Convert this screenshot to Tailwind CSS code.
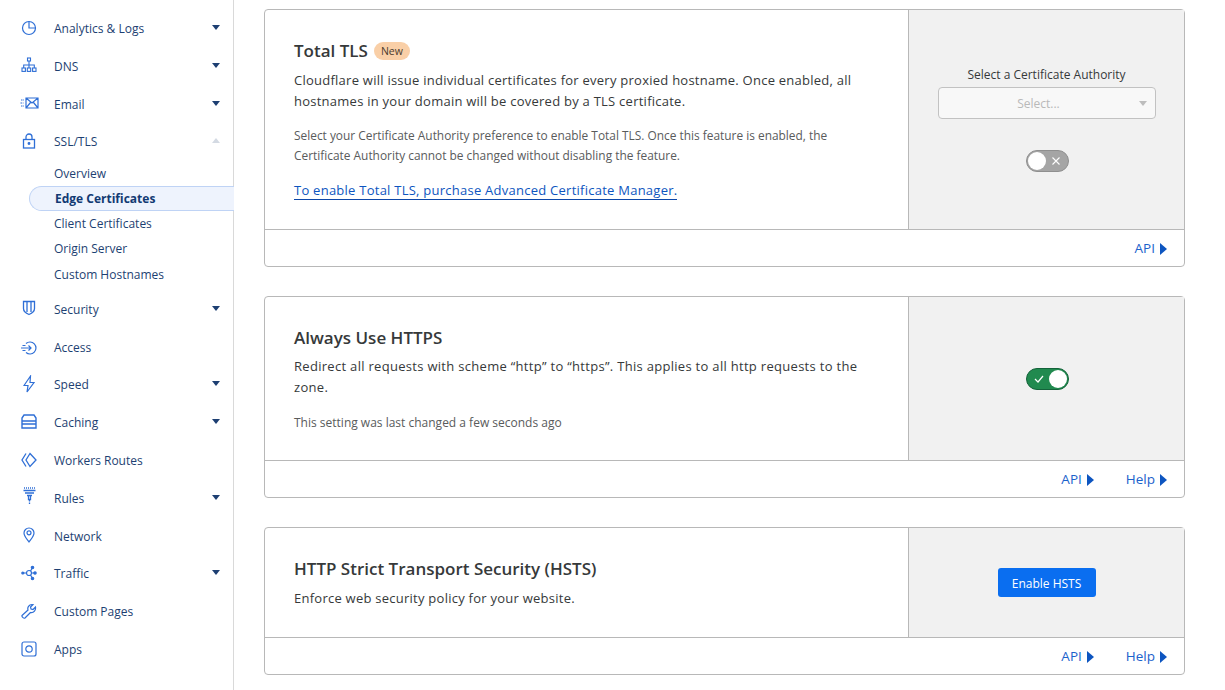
<!DOCTYPE html>
<html><head><meta charset="utf-8"><script src="https://cdn.jsdelivr.net/npm/@tailwindcss/browser@4"></script></head>
<body class="bg-white font-['Open_Sans',sans-serif] overflow-hidden">
<div class="flex w-[1225px] h-[690px] overflow-hidden">
<aside class="w-[234px] shrink-0 h-full border-r border-[#d9d9d9] pt-[10px] text-[12px] text-[#1d3f72]">
 <div class="h-[38px] flex items-center relative"><svg class="absolute left-[21px] top-[10px] w-4 h-4" viewBox="0 0 16 16" fill="none" stroke="#2f6fd6" stroke-width="1.200"><circle cx="8" cy="8" r="6.500"/><path d="M8 1.500V8h6.500"/></svg><span class="ml-[54px]">Analytics &amp; Logs</span><i class="absolute left-[212px] top-[15px] border-x-[4.500px] border-x-transparent border-t-[5px] border-t-[#1d3f72]"></i></div>
 <div class="h-[38px] flex items-center relative"><svg class="absolute left-[21px] top-[9px] w-4 h-4" viewBox="0 0 16 16" fill="none" stroke="#2f6fd6" stroke-width="1.100"><rect x="6.500" y="1" width="3" height="3"/><rect x="1" y="11" width="3.400" height="3.400"/><rect x="6.300" y="11" width="3.400" height="3.400"/><rect x="11.600" y="11" width="3.400" height="3.400"/><path d="M8 4v7M2.700 11V8h10.600v3"/></svg><span class="ml-[54px]">DNS</span><i class="absolute left-[212px] top-[15px] border-x-[4.500px] border-x-transparent border-t-[5px] border-t-[#1d3f72]"></i></div>
 <div class="h-[38px] flex items-center relative"><svg class="absolute left-[20px] top-[9px] w-[19px] h-4" viewBox="0 0 19 16" fill="none" stroke="#2f6fd6" stroke-width="1.200"><path d="M6 3h12v10H6zM6 3l6 5 6-5M6 13l4.500-5.500M18 13l-4.500-5.500"/><path d="M1 5h3M0.500 8h3M1 11h3" stroke-dasharray="1.500 .7"/></svg><span class="ml-[54px]">Email</span><i class="absolute left-[212px] top-[15px] border-x-[4.500px] border-x-transparent border-t-[5px] border-t-[#1d3f72]"></i></div>
 <div class="h-[36px] flex items-center relative"><svg class="absolute left-[22px] top-[9px] w-[14px] h-4" viewBox="0 0 14 16" fill="none" stroke="#2f6fd6" stroke-width="1.300"><rect x="1.500" y="6.500" width="11" height="8.500"/><path d="M4 6.500V4a3 3 0 0 1 6 0v2.500"/><circle cx="7" cy="10.500" r=".8" fill="#2f6fd6"/></svg><span class="ml-[54px]">SSL/TLS</span><i class="absolute left-[212px] top-[14px] border-x-[4.500px] border-x-transparent border-b-[5px] border-b-[#d4dae3]"></i></div>
 <div class="pt-[1px] pb-[2px] flex flex-col">
  <a class="h-[25px] flex items-center pl-[54px]">Overview</a>
  <a class="h-[25px] flex items-center ml-[29px] pl-[26px] font-bold relative text-[#123a73]"><span class="absolute left-0 right-[-1px] inset-y-0 rounded-l-[13px] bg-[#eef3fd] border border-r-0 border-[#bfd3f5]"></span><span class="relative">Edge Certificates</span></a>
  <a class="h-[25px] flex items-center pl-[54px]">Client Certificates</a>
  <a class="h-[25px] flex items-center pl-[54px]">Origin Server</a>
  <a class="h-[27px] flex items-center pl-[54px]">Custom Hostnames</a>
 </div>
 <div class="h-[40px] flex items-center relative"><svg class="absolute left-[22px] top-[10px] w-[14px] h-4" viewBox="0 0 14 16" fill="none" stroke="#2f6fd6" stroke-width="1.300"><path d="M1.500 1.500h11v7c0 3-3 5-5.500 6-2.500-1-5.500-3-5.500-6z"/><path d="M5 1.500v10.500M9 1.500v10.500"/></svg><span class="ml-[54px]">Security</span><i class="absolute left-[212px] top-[16px] border-x-[4.500px] border-x-transparent border-t-[5px] border-t-[#1d3f72]"></i></div>
 <div class="h-[36px] flex items-center relative"><svg class="absolute left-[20px] top-[10px] w-[18px] h-4" viewBox="0 0 18 16" fill="none" stroke="#2f6fd6" stroke-width="1.200"><path d="M6 3.500a6 6 0 1 1 0 9"/><path d="M1 8h10M8.500 5.500 11 8l-2.500 2.500M2.500 5.500h3M2.500 10.500h3"/></svg><span class="ml-[54px]">Access</span></div>
 <div class="h-[38px] flex items-center relative"><svg class="absolute left-[23px] top-[9px] w-3 h-[18px]" viewBox="0 0 12 18" fill="none" stroke="#2f6fd6" stroke-width="1.200"><path d="M7.500 1 1 10.500h4L4 17l7-9.500H7z"/></svg><span class="ml-[54px]">Speed</span><i class="absolute left-[212px] top-[15px] border-x-[4.500px] border-x-transparent border-t-[5px] border-t-[#1d3f72]"></i></div>
 <div class="h-[38px] flex items-center relative"><svg class="absolute left-[21px] top-[10px] w-4 h-[15px]" viewBox="0 0 16 15" fill="none" stroke="#2f6fd6" stroke-width="1.400"><path d="M3 1h10l2 3v3H1V4zM1 7h14v3H1zM1 10h14v4H1z"/></svg><span class="ml-[54px]">Caching</span><i class="absolute left-[212px] top-[15px] border-x-[4.500px] border-x-transparent border-t-[5px] border-t-[#1d3f72]"></i></div>
 <div class="h-[38px] flex items-center relative"><svg class="absolute left-[21px] top-[10px] w-4 h-4" viewBox="0 0 16 16" fill="none" stroke="#2f6fd6" stroke-width="1.300"><path d="M5 1.500 1 8l4 6.500M9 1.500 15 8l-6 6.500L5 8z"/></svg><span class="ml-[54px]">Workers Routes</span></div>
 <div class="h-[38px] flex items-center relative"><svg class="absolute left-[23px] top-[7px] w-[13px] h-[19px]" viewBox="0 0 13 19" fill="none" stroke="#2f6fd6" stroke-width="1.300"><path d="M1 1h11" stroke-dasharray="1 1"/><path d="M.500 3.500h12M2 6h9M4 8.500h5M5.500 8.500v4h2v-4"/><path d="M6.500 13v5" stroke-dasharray="1.500 1"/></svg><span class="ml-[54px]">Rules</span><i class="absolute left-[212px] top-[15px] border-x-[4.500px] border-x-transparent border-t-[5px] border-t-[#1d3f72]"></i></div>
 <div class="h-[37px] flex items-center relative"><svg class="absolute left-[23px] top-[9px] w-3 h-4" viewBox="0 0 12 16" fill="none" stroke="#2f6fd6" stroke-width="1.200"><path d="M6 15C3 11 1 9 1 6a5 5 0 0 1 10 0c0 3-2 5-5 9z"/><circle cx="6" cy="5.800" r="2"/></svg><span class="ml-[54px]">Network</span></div>
 <div class="h-[38px] flex items-center relative"><svg class="absolute left-[21px] top-[10px] w-4 h-4" viewBox="0 0 16 16" fill="none" stroke="#2f6fd6" stroke-width="1.200"><circle cx="8" cy="8" r="2.500"/><circle cx="1.800" cy="8" r="1" fill="#2f6fd6"/><circle cx="11.500" cy="2.500" r="1.200" fill="#2f6fd6"/><circle cx="14" cy="8" r="1.200" fill="#2f6fd6"/><circle cx="11.500" cy="13.500" r="1.200" fill="#2f6fd6"/><path d="M3 8h2.500M9.500 6l1.500-2.500M10.500 8H13M9.500 10l1.500 2.500"/></svg><span class="ml-[54px]">Traffic</span><i class="absolute left-[212px] top-[15px] border-x-[4.500px] border-x-transparent border-t-[5px] border-t-[#1d3f72]"></i></div>
 <div class="h-[38px] flex items-center relative"><svg class="absolute left-[21px] top-[10px] w-4 h-4" viewBox="0 0 16 16" fill="none" stroke="#2f6fd6" stroke-width="1.200"><path d="M1 12.500 7 7c-.8-2.500.8-5.500 4-5.500l1 .2-2.500 2.300.5 2 2 .5L14.500 4c.5 3-1.500 6-5 5.500L4 15c-1 .8-3.500-1-3-2.500z"/></svg><span class="ml-[54px]">Custom Pages</span></div>
 <div class="h-[38px] flex items-center relative"><svg class="absolute left-[21px] top-[10px] w-4 h-4" viewBox="0 0 16 16" fill="none" stroke="#2f6fd6" stroke-width="1.200"><rect x="1" y="1" width="14" height="14" rx="2"/><circle cx="8" cy="8" r="3.200"/></svg><span class="ml-[54px]">Apps</span></div>
</aside>
<main class="flex-1 pl-[30px] pr-[40px] pt-[9px] text-[#36393a]">
 <section class="border border-[#b8b8b8] rounded-[4px] h-[258px] flex flex-col">
  <div class="flex h-[220px] border-b border-[#b8b8b8]">
   <div class="w-[643px] pl-[29px] pr-[40px] pt-[29px]">
    <div class="flex items-center gap-[6px] h-[24px]"><h3 class="text-[17px] font-semibold">Total TLS</h3><span class="bg-[#f9cfa7] text-[#4a3a2d] rounded-[9px] text-[10.500px] px-[7px] h-[18px] leading-[18px]">New</span></div>
    <p class="text-[13px] leading-[21px] tracking-[.25px] mt-[7px]">Cloudflare will issue individual certificates for every proxied hostname. Once enabled, all hostnames in your domain will be covered by a TLS certificate.</p>
    <p class="text-[11.900px] leading-[19.500px] text-[#595b5c] mt-[14px]">Select your Certificate Authority preference to enable Total TLS. Once this feature is enabled, the Certificate Authority cannot be changed without disabling the feature.</p>
    <a class="inline-block mt-[16px] text-[13px] tracking-[.25px] leading-[18px] text-[#0d55c0] border-b border-[#0d47a8]">To enable Total TLS, purchase Advanced Certificate Manager.</a>
   </div>
   <div class="flex-1 bg-[#f1f1f1] border-l border-[#b8b8b8] flex flex-col items-center pt-[55px]">
    <div class="text-[12px] h-[20px] leading-[20px]">Select a Certificate Authority</div>
    <div class="w-[218px] h-[32px] mt-[2px] border border-[#c2c2c2] rounded-[4px] bg-[#f8f8f8] relative flex items-center justify-center pr-[16px] pt-[1px] text-[12px] text-[#b9b9b9]">Select...<i class="absolute right-[8px] top-[13px] border-x-[4px] border-x-transparent border-t-[5px] border-t-[#bdbdbd]"></i></div>
    <div class="mt-[31px] ml-[1px] w-[43px] h-[22px] rounded-full bg-[#a5a5a5] border border-[#8f8f8f] relative"><span class="absolute left-[1px] top-[1px] w-[18px] h-[18px] rounded-full bg-white"></span><svg class="absolute left-[25px] top-[6px] w-2 h-2" viewBox="0 0 8 8" stroke="#fff" stroke-width="1.100"><path d="M.5.500l7 7M7.500.500l-7 7"/></svg></div>
   </div>
  </div>
  <div class="flex-1 flex items-center justify-end pr-[17px] gap-[32px] text-[13.500px] text-[#1b62cc] pt-[1px]"><a class="flex items-center gap-[5px]">API<i class="border-y-[6px] border-y-transparent border-l-[7px] border-l-[#0d55c0]"></i></a></div>
 </section>
 <section class="mt-[29px] border border-[#b8b8b8] rounded-[4px] h-[202px] flex flex-col">
  <div class="flex h-[164px] border-b border-[#b8b8b8]">
   <div class="w-[643px] pl-[29px] pr-[40px] pt-[29px]">
    <h3 class="text-[17px] font-semibold h-[24px] leading-[24px]">Always Use HTTPS</h3>
    <p class="text-[13px] leading-[21px] tracking-[.3px] mt-[6px]">Redirect all requests with scheme “http” to “https”. This applies to all http requests to the zone.</p>
    <p class="text-[12px] leading-[20px] text-[#595b5c] mt-[15px]">This setting was last changed a few seconds ago</p>
   </div>
   <div class="flex-1 bg-[#f1f1f1] border-l border-[#b8b8b8] flex justify-center pt-[71px]">
    <div class="ml-[1px] w-[43px] h-[22px] rounded-full bg-[#218a4f] border border-[#14633a] relative"><svg class="absolute left-[7px] top-[6px] w-[10px] h-2" viewBox="0 0 10 8" fill="none" stroke="#fff" stroke-width="1.200"><path d="M1 4l3 3 5-6"/></svg><span class="absolute right-[1px] top-[1px] w-[18px] h-[18px] rounded-full bg-white"></span></div>
   </div>
  </div>
  <div class="flex-1 flex items-center justify-end pr-[17px] gap-[32px] text-[13.500px] text-[#1b62cc] pt-[1px]"><a class="flex items-center gap-[5px]">API<i class="border-y-[6px] border-y-transparent border-l-[7px] border-l-[#0d55c0]"></i></a><a class="flex items-center gap-[5px]">Help<i class="border-y-[6px] border-y-transparent border-l-[7px] border-l-[#0d55c0]"></i></a></div>
 </section>
 <section class="mt-[29px] border border-[#b8b8b8] rounded-[4px] h-[148px] flex flex-col">
  <div class="flex h-[110px] border-b border-[#b8b8b8]">
   <div class="w-[643px] pl-[29px] pr-[40px] pt-[29px]">
    <h3 class="text-[17px] font-semibold h-[24px] leading-[24px]">HTTP Strict Transport Security (HSTS)</h3>
    <p class="text-[13px] leading-[21px] tracking-[.25px] mt-[7px]">Enforce web security policy for your website.</p>
   </div>
   <div class="flex-1 bg-[#f1f1f1] border-l border-[#b8b8b8] flex justify-center pt-[40px]">
    <button class="w-[98px] h-[29px] bg-[#0a6ef0] rounded-[3px] text-white text-[12px] pt-[2px]">Enable HSTS</button>
   </div>
  </div>
  <div class="flex-1 flex items-center justify-end pr-[17px] gap-[32px] text-[13.500px] text-[#1b62cc] pt-[1px]"><a class="flex items-center gap-[5px]">API<i class="border-y-[6px] border-y-transparent border-l-[7px] border-l-[#0d55c0]"></i></a><a class="flex items-center gap-[5px]">Help<i class="border-y-[6px] border-y-transparent border-l-[7px] border-l-[#0d55c0]"></i></a></div>
 </section>
</main>
</div>
</body></html>
